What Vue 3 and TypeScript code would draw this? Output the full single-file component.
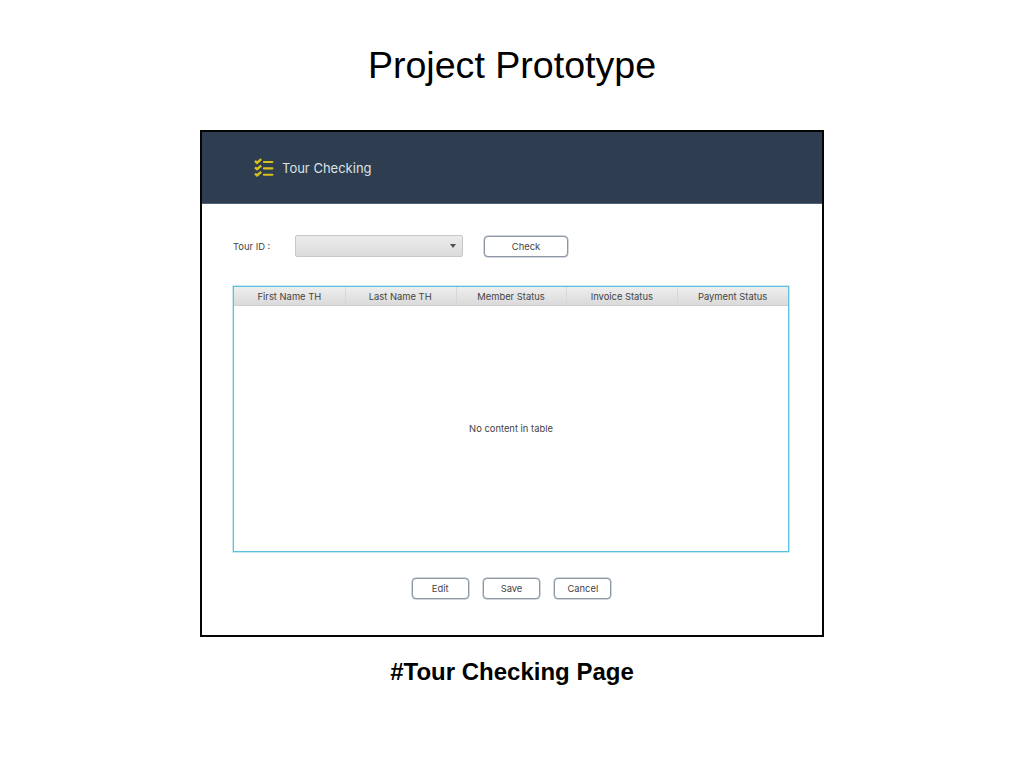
<script setup lang="ts">
const columns: string[] = ['First Name TH', 'Last Name TH', 'Member Status', 'Invoice Status', 'Payment Status']
const actions: string[] = ['Edit', 'Save', 'Cancel']
</script>

<template>
  <main class="slide">
    <h1 class="title">Project Prototype</h1>
    <section class="window">
      <header class="header">
        <svg class="icon" viewBox="0 0 20 20" width="20" height="20" fill="none" stroke="#d9c01c">
          <g v-for="y in [3.6, 10, 16.3]" :key="y" :transform="`translate(0 ${y})`">
            <path d="M1 -0.6 L3.1 1.2 L7.2 -2.4" stroke-width="2.4" />
            <path d="M9.9 0.4 H18.4" stroke-width="2.1" stroke-linecap="round" />
          </g>
        </svg>
        <span class="heading">Tour Checking</span>
      </header>
      <div class="form">
        <label class="label">Tour ID :</label>
        <div class="select"><i class="arrow"></i></div>
        <button class="btn check">Check</button>
      </div>
      <div class="table">
        <div class="head">
          <div v-for="c in columns" :key="c" class="col">{{ c }}</div>
        </div>
        <div class="body">No content in table</div>
      </div>
      <div class="actions">
        <button v-for="a in actions" :key="a" class="btn">{{ a }}</button>
      </div>
    </section>
    <h2 class="caption">#Tour Checking Page</h2>
  </main>
</template>

<style>
body { margin: 0; background: #fff; }
</style>

<style scoped>
.slide {
  width: 1024px;
  height: 768px;
  box-sizing: border-box;
  padding-top: 43px;
  overflow: hidden;
  display: flex;
  flex-direction: column;
  align-items: center;
  background: #fff;
  color: #000;
  font-family: "Liberation Sans", Arial, sans-serif;
}
.title {
  margin: 0;
  font-size: 37.6px;
  font-weight: 400;
  line-height: 44px;
  white-space: nowrap;
}
.window {
  width: 624px;
  height: 507px;
  margin-top: 43px;
  box-sizing: border-box;
  border: 2px solid #050505;
  background: #fff;
  font-family: Inter, sans-serif;
  font-size: 9.4px;
  color: #444;
}
.header {
  height: 72px;
  box-sizing: border-box;
  padding: 1px 0 0 52px;
  display: flex;
  align-items: center;
  background: #2e3e50;
  border-bottom: 1px solid #4f6478;
}
.heading {
  margin-left: 8px;
  font-size: 13px;
  line-height: 18px;
  color: #dde1e5;
}
.form {
  margin: 31px 0 0 31px;
  height: 22px;
  display: flex;
  align-items: center;
}
.label { width: 62px; }
.select {
  width: 168px;
  height: 22px;
  box-sizing: border-box;
  padding-right: 6px;
  display: flex;
  align-items: center;
  justify-content: flex-end;
  border: 1px solid #c8c8c8;
  border-radius: 2px;
  background: linear-gradient(#ebebeb, #dcdcdc);
}
.arrow {
  border: 3.5px solid transparent;
  border-top: 4px solid #505050;
  border-bottom: 0;
}
.btn {
  width: 57px;
  height: 21px;
  box-sizing: border-box;
  padding: 0;
  border: 1px solid #8d97a5;
  box-shadow: 0 0 0 0.5px #a5adb8;
  border-radius: 4px;
  background: #fff;
  font: inherit;
  color: inherit;
}
.check { width: 84px; margin-left: 21px; }
.table {
  width: 556px;
  height: 266px;
  margin: 29px 0 0 31px;
  box-sizing: border-box;
  border: 1px solid #5cc0e0;
  box-shadow: 0 0 0 0.5px #8ed3e9;
  display: flex;
  flex-direction: column;
}
.head {
  height: 19px;
  box-sizing: border-box;
  display: flex;
  border-bottom: 1px solid #cfcfcf;
  background: linear-gradient(#eeeeee, #dadada);
}
.col {
  flex: 1;
  line-height: 20px;
  text-align: center;
}
.col + .col { box-shadow: inset 1px 0 #d8d8d8; }
.body {
  flex: 1;
  display: flex;
  align-items: center;
  justify-content: center;
}
.actions {
  margin: 26px 0 0 -1px;
  display: flex;
  justify-content: center;
  gap: 14.3px;
}
.caption {
  margin: 20px 0 0;
  font-size: 24px;
  font-weight: 700;
  line-height: 30px;
  white-space: nowrap;
}
</style>
